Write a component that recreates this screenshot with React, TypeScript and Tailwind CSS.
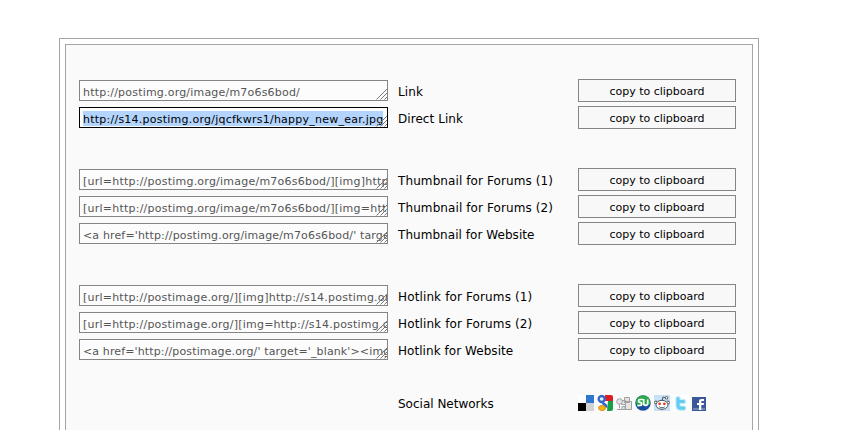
import type { ReactNode } from 'react';

type Row = { value: string; label: string; selected?: boolean; labelSpacing: string; valueSpacing: string };

const groups: { gap: string; rows: Row[] }[] = [
  {
    gap: '',
    rows: [
      { value: 'http://postimg.org/image/m7o6s6bod/', label: 'Link', labelSpacing: 'tracking-[0.1px]', valueSpacing: 'tracking-[0.2px]' },
      { value: 'http://s14.postimg.org/jqcfkwrs1/happy_new_ear.jpg', label: 'Direct Link', selected: true, labelSpacing: 'tracking-[0.06px]', valueSpacing: 'tracking-[0.24px]' },
    ],
  },
  {
    gap: 'mt-[39px]',
    rows: [
      { value: '[url=http://postimg.org/image/m7o6s6bod/][img]http', label: 'Thumbnail for Forums (1)', labelSpacing: 'tracking-[0.1px]', valueSpacing: 'tracking-[0.23px]' },
      { value: '[url=http://postimg.org/image/m7o6s6bod/][img=http', label: 'Thumbnail for Forums (2)', labelSpacing: 'tracking-[0.1px]', valueSpacing: 'tracking-[0.23px]' },
      { value: "<a href='http://postimg.org/image/m7o6s6bod/' targe", label: 'Thumbnail for Website', labelSpacing: 'tracking-[0.05px]', valueSpacing: 'tracking-[0.15px]' },
    ],
  },
  {
    gap: 'mt-[39px]',
    rows: [
      { value: '[url=http://postimage.org/][img]http://s14.postimg.or', label: 'Hotlink for Forums (1)', labelSpacing: 'tracking-[0.13px]', valueSpacing: 'tracking-[0.22px]' },
      { value: '[url=http://postimage.org/][img=http://s14.postimg.o', label: 'Hotlink for Forums (2)', labelSpacing: 'tracking-[0.13px]', valueSpacing: 'tracking-[0.22px]' },
      { value: "<a href='http://postimage.org/' target='_blank'><img", label: 'Hotlink for Website', labelSpacing: 'tracking-[0.05px]', valueSpacing: 'tracking-[0.13px]' },
    ],
  },
];

function CodeBox({ row }: { row: Row }) {
  return (
    <div
      className={`relative h-[21px] w-[309px] shrink-0 overflow-hidden border bg-[#fcfcfc] pl-[3px] pt-[3px] text-[11px] leading-[18px] whitespace-pre ${
        row.selected ? 'border-black text-black' : 'border-[#858585] text-[#555]'
      }`}
    >
      <span className={`inline-block h-[15px] align-top ${row.valueSpacing} ${row.selected ? 'bg-[#b3d4fd]' : ''}`}>{row.value}</span>
      <svg className="absolute right-0 bottom-0" width="11" height="12" viewBox="0 0 11 12" stroke="#777" strokeWidth="1">
        <path d="M.5 11.5 11 1M4.5 11.5 11 5M8.5 11.5 11 9" />
      </svg>
    </div>
  );
}

function Icon({ children }: { children: ReactNode }) {
  return (
    <svg width="16" height="16" viewBox="0 0 16 16">
      {children}
    </svg>
  );
}

function SocialIcons() {
  return (
    <div className="flex gap-[3px]">
      <Icon>
        <path fill="#fff" d="M0 0h8v8H0z" />
        <path fill="#3274d1" d="M8 0h8v8H8z" />
        <path fill="#000" d="M0 8h8v8H0z" />
        <path fill="#d2d2d2" d="M8 8h8v8H8z" />
      </Icon>
      <Icon>
        <path fill="#fff" d="M0 0h16v16H0z" />
        <path fill="#e01b22" d="M8 0h6a2 2 0 0 1 2 2v4H8z" />
        <path fill="#16a045" d="M11 6h5v8a2 2 0 0 1-2 2h-4z" />
        <ellipse cx="4.7" cy="4" rx="3" ry="3" fill="#e8effa" stroke="#3269c8" strokeWidth="2.4" />
        <path d="M6 7.5c0 2 4 2 3 5" fill="none" stroke="#3269c8" strokeWidth="2.8" />
        <ellipse cx="5" cy="13" rx="3.5" ry="2.5" fill="#f4b315" stroke="#d99412" />
      </Icon>
      <Icon>
        <path fill="#fafafa" d="M0 0h16v16H0z" />
        <g fill="#e4e4e4" stroke="#a0a0a0">
          <path d="M8.5 2.5h5v5h-5zM9.5 6.5h6v8h-6zM5.5 5.5h4v4h-4z" />
          <circle cx="3.5" cy="6.5" r="2.8" />
          <path d="M3.5 9.5v4M1 14.5h5M6 11.5h3v3H6z" />
        </g>
      </Icon>
      <Icon>
        <circle cx="8" cy="8" r="7.7" fill="#174f9e" />
        <path fill="#27ad45" d="M.8 7C1.8 2 5.5.3 9.5.8S15.5 5 15 8.5c-2 2.5-4.5 2-7 1.5L3 12z" />
        <path d="M8 4.5H5.3C3 4.5 2.8 7 5 7.4c2.4.4 2.2 3.1-.2 3.1H2.3M8.7 4v4.5c0 2.6 4 2.6 4 0V4.5" fill="none" stroke="#fff" strokeWidth="1.7" />
      </Icon>
      <Icon>
        <path fill="#c9e1f7" d="M0 0h16v16H0z" />
        <g stroke="#4b555c" fill="#fff">
          <path d="m8 6 1-4 3 1" fill="none" />
          <circle cx="12.5" cy="2.8" r="1.3" />
          <circle cx="2" cy="7.5" r="1.5" />
          <circle cx="14" cy="7.5" r="1.5" />
          <ellipse cx="8" cy="9.8" rx="6" ry="4.5" />
          <path d="M5.3 11.8c1.5 1.3 3.9 1.3 5.4 0" fill="none" />
        </g>
        <circle cx="5.6" cy="8.8" r="1.4" fill="#ed3c25" />
        <circle cx="10.4" cy="8.8" r="1.4" fill="#ed3c25" />
      </Icon>
      <Icon>
        <path fill="#fff" d="M0 0h16v16H0z" />
        <path d="M5 3.5v6.7c0 2 1.1 3 3 3h2.7M5 6.5h5.5" fill="none" stroke="#c5edf8" strokeWidth="5.5" strokeLinecap="round" strokeLinejoin="round" />
        <path d="M5 3.5v6.7c0 2 1.1 3 3 3h2.7M5 6.5h5.5" fill="none" stroke="#63cdf1" strokeWidth="3.2" strokeLinecap="round" strokeLinejoin="round" />
      </Icon>
      <Icon>
        <path fill="#3b5998" d="M0 2h14v14H0z" />
        <path fill="#6d84b4" d="M1 13h12v2H1z" />
        <path fill="#fff" d="M7 15v-5H5V8h2V6.5C7 4.7 8 4 9.5 4H12v2h-1.5c-.9 0-1.2.3-1.2 1v1H12l-.3 2H9.3v5z" />
      </Icon>
    </div>
  );
}

export default function App() {
  return (
    <div className="h-[445px] w-[845px] overflow-hidden bg-white pl-[59px] pt-[38px] font-['DejaVu_Sans',Verdana,sans-serif] text-black">
      <div className="h-[392px] w-[700px] border border-b-0 border-[#a5a5a5] px-[5px] pt-[5px]">
        <div className="h-full w-[688px] border border-b-0 border-[#a5a5a5] bg-[#fafafa] pl-[13px] pt-[34px]">
          {groups.map((group, i) => (
            <div key={i} className={`flex flex-col gap-1 ${group.gap}`}>
              {group.rows.map((row) => (
                <div key={row.label} className="flex h-[23px] items-center">
                  <CodeBox row={row} />
                  <div className={`ml-[10px] w-[180px] pt-[3px] text-[12px] leading-[20px] whitespace-nowrap ${row.labelSpacing}`}>{row.label}</div>
                  <button className="h-[23px] w-[158px] border border-[#858585] bg-[#f8f8f8] pt-[2px] text-[11px] leading-[19px]">copy to clipboard</button>
                </div>
              ))}
            </div>
          ))}
          <div className="mt-[34px] flex items-start">
            <div className="ml-[319px] w-[180px] pt-px text-[12px] leading-4">Social Networks</div>
            <SocialIcons />
          </div>
        </div>
      </div>
    </div>
  );
}
